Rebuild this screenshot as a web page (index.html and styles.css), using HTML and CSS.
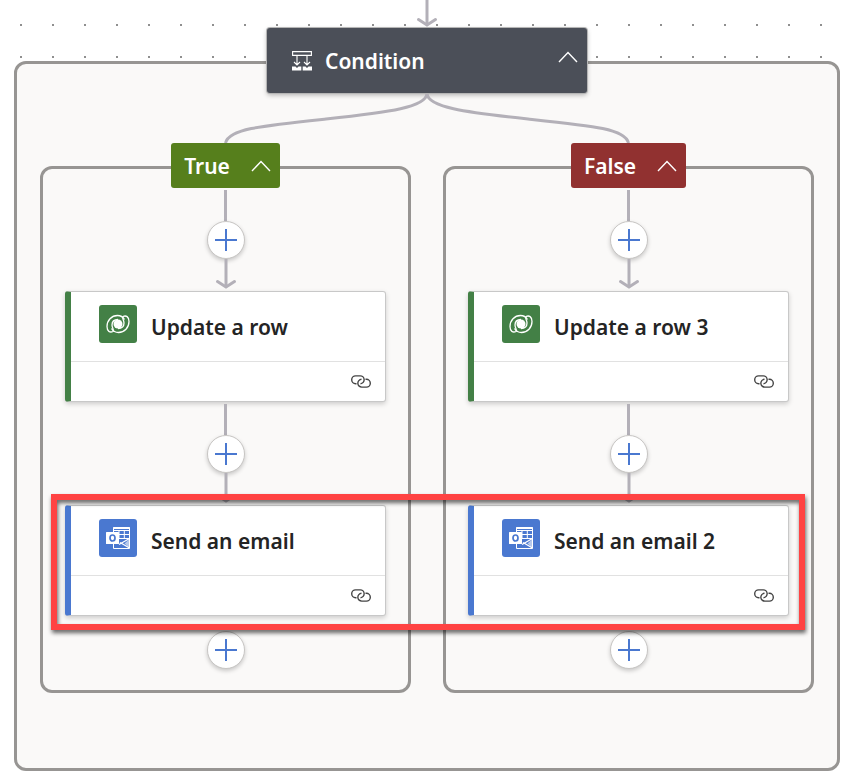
FILE: index.html
```
<!DOCTYPE html>
<html lang="en">
<head>
    <meta charset="UTF-8">
    <meta name="viewport" content="width=device-width, initial-scale=1.0">
    <title>Condition flow</title>
    <link rel="stylesheet" href="styles.css">
</head>
<body>

    <!-- Shared icons -->
    <svg class="icon-defs" aria-hidden="true">
        <symbol id="chevron" viewBox="0 0 20 12">
            <path d="M1 11L10 1.5L19 11" fill="none" stroke="currentColor" stroke-width="1.4"/>
        </symbol>
        <symbol id="plus" viewBox="0 0 24 24">
            <path d="M12 1V23M1 12H23" fill="none" stroke="currentColor" stroke-width="2"/>
        </symbol>
        <symbol id="arrow" viewBox="0 0 22 30">
            <path d="M11 0V28" fill="none" stroke="currentColor" stroke-width="3"/>
            <path d="M2.5 22.5L11 28L19.5 22.5" fill="none" stroke="currentColor" stroke-width="3" stroke-linecap="round"/>
        </symbol>
        <symbol id="link" viewBox="0 0 20 13">
            <g fill="none" stroke="currentColor" stroke-width="1.4">
                <path d="M5.5 8.7H4.6A3.9 3.9 0 0 1 4.6 .9H9A3.9 3.9 0 0 1 9.5 8.7"/>
                <path d="M14.5 4.3H15.4A3.9 3.9 0 0 1 15.4 12.1H11A3.9 3.9 0 0 1 10.5 4.3"/>
            </g>
        </symbol>
        <symbol id="dataverse" viewBox="0 0 24 20">
            <g fill="none" stroke="#fff" stroke-width="1.3">
                <path d="M18.5 5.5C17 3 15 1.5 11.500 1.500C5.500 1.500 1 6.500 1 12.500C1 17.500 4 18.800 7 17.500C8.500 16 6 14.500 6 11C6 7.500 8.500 5.500 12 5.500"/>
                <path d="M5.500 14.500C7 17 9 18.500 12.500 18.500C18.500 18.500 23 13.500 23 7.500C23 2.500 20 1.200 17 2.500C15.500 4 18 5.500 18 9C18 12.500 15.500 14.500 12 14.500"/>
            </g>
            <ellipse cx="12" cy="10" rx="4.5" ry="4.500" fill="#fff"/>
        </symbol>
        <symbol id="outlook" viewBox="0 0 24 24">
            <path d="M7.5 1.5H23.5V22.5H7.5zM7.5 4.5H23.5M7.5 8.5H23.5M7.5 12.5H23.5M13 4.5V12.5M18.3 4.5V12.5" fill="none" stroke="#fff" stroke-width="1"/>
            <path d="M7.5 1H23.5V3H7.5z" fill="#fff"/>
            <path d="M23.5 12.5L13 18.5M14 16.5L23.5 22" fill="none" stroke="#fff" stroke-width="1.3"/>
            <path d="M23.5 13L18.5 17.5L23.5 22z" fill="#fff" opacity=".6"/>
            <rect x="0" y="6" width="13" height="12" rx=".5" fill="#fff"/>
            <ellipse cx="6.5" cy="12" rx="2.5" ry="3" fill="none" stroke="#4a78d0" stroke-width="1.7"/>
        </symbol>
    </svg>

    <main class="canvas">
        <svg class="arrow entry-arrow"><use href="#arrow"/></svg>

        <section class="scope">
            <button class="condition" type="button">
                <svg class="condition-icon" viewBox="0 0 20 20">
                    <path d="M.6 .6H19.4V4.4H.6zM5 4.5V14M15 4.5V14M2 11L5 14L8 11M12 11L15 14L18 11" fill="none" stroke="#fff" stroke-width="1.1"/>
                    <path d="M0 15.5H3.5L5 17L6.5 15.5H9.3V19.5H0zM10.7 15.5H13.5L15 17L16.5 15.5H20V19.5H10.7z" fill="#fff"/>
                </svg>
                <span class="condition-title">Condition</span>
                <svg class="chevron"><use href="#chevron"/></svg>
            </button>

            <svg class="split" viewBox="0 0 774 50" preserveAspectRatio="none">
                <path d="M387 1C385 14 352 19 286 26S189 36 185.5 50"/>
                <path d="M387 1C389 14 422 19 488 26S585 36 588.5 50"/>
            </svg>

            <div class="branches">
                <div class="branch">
                    <button class="branch-label true" type="button">
                        True
                        <svg class="chevron"><use href="#chevron"/></svg>
                    </button>
                    <div class="connector">
                        <span class="line"></span>
                        <button class="add" type="button" aria-label="Add an action"><svg><use href="#plus"/></svg></button>
                        <svg class="arrow"><use href="#arrow"/></svg>
                    </div>
                    <article class="card dataverse">
                        <div class="card-head">
                            <span class="card-icon"><svg><use href="#dataverse"/></svg></span>
                            <h2>Update a row</h2>
                        </div>
                        <div class="card-foot"><svg class="link"><use href="#link"/></svg></div>
                    </article>
                    <div class="connector">
                        <span class="line"></span>
                        <button class="add" type="button" aria-label="Add an action"><svg><use href="#plus"/></svg></button>
                        <svg class="arrow"><use href="#arrow"/></svg>
                    </div>
                    <article class="card outlook">
                        <div class="card-head">
                            <span class="card-icon"><svg><use href="#outlook"/></svg></span>
                            <h2>Send an email</h2>
                        </div>
                        <div class="card-foot"><svg class="link"><use href="#link"/></svg></div>
                    </article>
                    <button class="add last" type="button" aria-label="Add an action"><svg><use href="#plus"/></svg></button>
                </div>

                <div class="branch">
                    <button class="branch-label false" type="button">
                        False
                        <svg class="chevron"><use href="#chevron"/></svg>
                    </button>
                    <div class="connector">
                        <span class="line"></span>
                        <button class="add" type="button" aria-label="Add an action"><svg><use href="#plus"/></svg></button>
                        <svg class="arrow"><use href="#arrow"/></svg>
                    </div>
                    <article class="card dataverse">
                        <div class="card-head">
                            <span class="card-icon"><svg><use href="#dataverse"/></svg></span>
                            <h2>Update a row 3</h2>
                        </div>
                        <div class="card-foot"><svg class="link"><use href="#link"/></svg></div>
                    </article>
                    <div class="connector">
                        <span class="line"></span>
                        <button class="add" type="button" aria-label="Add an action"><svg><use href="#plus"/></svg></button>
                        <svg class="arrow"><use href="#arrow"/></svg>
                    </div>
                    <article class="card outlook">
                        <div class="card-head">
                            <span class="card-icon"><svg><use href="#outlook"/></svg></span>
                            <h2>Send an email 2</h2>
                        </div>
                        <div class="card-foot"><svg class="link"><use href="#link"/></svg></div>
                    </article>
                    <button class="add last" type="button" aria-label="Add an action"><svg><use href="#plus"/></svg></button>
                </div>

                <div class="highlight"></div>
            </div>
        </section>
    </main>

</body>
</html>
```

FILE: styles.css
```
* {
    box-sizing: border-box;
}

body {
    margin: 0;
    font-family: "Noto Sans", "Open Sans", sans-serif;
    color: #242424;
    background: #fff;
}

button {
    font: inherit;
    border: none;
    cursor: pointer;
}

svg {
    display: block;
    flex: none;
}

.icon-defs {
    position: absolute;
    width: 0;
    height: 0;
}

.canvas {
    display: flex;
    flex-direction: column;
    padding: 0 10px 4px 14px;
    background-image: radial-gradient(circle, #777 0, #999 1px, transparent 1px);
    background-size: 32px 32px;
    background-position: 5px 9px;
}

.arrow {
    width: 22px;
    height: 30px;
    color: #b3b0b8;
}

.entry-arrow {
    align-self: center;
    margin-top: -3px;
}

.scope {
    display: flex;
    flex-direction: column;
    align-items: center;
    margin-top: 34px;
    padding: 0 23px 75px;
    background: #faf9f8;
    border: 3px solid #979593;
    border-radius: 12px;
}

/* header sits on the top border of the scope */
.condition {
    display: flex;
    align-items: center;
    width: 320px;
    height: 65px;
    margin-top: -36px;
    padding: 0 9px 0 25px;
    color: #fff;
    background: #4b4f58;
    border-radius: 3px;
    box-shadow: 0 0 0 1px #b5b5b5, 0 2px 5px rgba(0, 0, 0, 0.3);
    font-size: 21px;
    font-weight: 600;
    text-align: left;
}

.condition-icon {
    width: 20px;
    height: 20px;
}

.condition-title {
    flex: 1;
    padding-left: 13px;
}

.chevron {
    width: 20px;
    height: 12px;
}

.condition .chevron {
    margin-bottom: 8px;
}

.split {
    width: 100%;
    height: 50px;
    fill: none;
    stroke: #b3b0b8;
    stroke-width: 3px;
}

.branches {
    position: relative;
    display: grid;
    grid-template-columns: 1fr 1fr;
    gap: 32px;
    width: 100%;
    margin-top: 23px;
}

.branch {
    display: flex;
    flex-direction: column;
    align-items: center;
    padding: 0 22px 21px;
    border: 3px solid #979593;
    border-radius: 12px;
}

.branch-label {
    display: flex;
    align-items: center;
    gap: 21px;
    height: 45px;
    margin-top: -26px;
    padding: 0 9px 0 13px;
    color: #fff;
    border-radius: 3px;
    font-size: 21px;
    font-weight: 600;
}

.branch-label.true {
    background: #567f1c;
}

.branch-label.false {
    background: #913130;
}

.connector {
    display: flex;
    flex-direction: column;
    align-items: center;
    padding: 2px 0;
}

.line {
    width: 3px;
    height: 31px;
    background: #b3b0b8;
}

.add {
    display: flex;
    align-items: center;
    justify-content: center;
    width: 38px;
    height: 38px;
    padding: 0;
    color: #4a78d0;
    background: #fff;
    border: 1px solid #c8c6c4;
    border-radius: 50%;
    box-shadow: 0 2px 4px rgba(0, 0, 0, 0.2);
}

.add svg {
    width: 24px;
    height: 24px;
}

.add.last {
    margin-top: 15px;
}

.card {
    width: 100%;
    background: #fff;
    border: 1px solid #c8c8c8;
    border-left: 6px solid;
    border-radius: 3px;
    box-shadow: 0 2px 5px rgba(0, 0, 0, 0.18);
}

.card.dataverse {
    border-left-color: #438046;
}

.card.outlook {
    border-left-color: #4a78d0;
}

.card-head {
    display: flex;
    gap: 14px;
    height: 70px;
    padding: 13px 0 0 28px;
    border-bottom: 1px solid #e1e1e1;
}

.card-icon {
    display: flex;
    align-items: center;
    justify-content: center;
    width: 38px;
    height: 38px;
    border-radius: 3px;
}

.card-icon svg {
    width: 24px;
    height: 24px;
}

.dataverse .card-icon {
    background: #438046;
}

.outlook .card-icon {
    background: #4a78d0;
}

.card h2 {
    margin: 0;
    padding-top: 7px;
    font-size: 21px;
    line-height: 30px;
    font-weight: 600;
}

.card-foot {
    display: flex;
    align-items: center;
    justify-content: flex-end;
    height: 39px;
    padding-right: 14px;
}

.link {
    width: 20px;
    height: 13px;
    color: #444;
}

.highlight {
    position: absolute;
    top: 328px;
    right: 9px;
    bottom: 63px;
    left: 11px;
    border: 6px solid #ff4343;
    filter: drop-shadow(1px 3px 2px rgba(0, 0, 0, 0.6));
    pointer-events: none;
}
```
